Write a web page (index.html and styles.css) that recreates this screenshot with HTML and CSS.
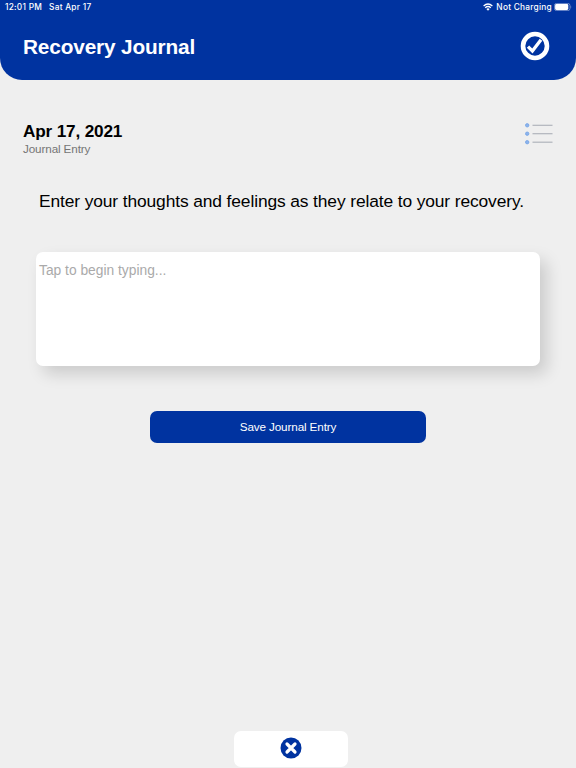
FILE: index.html
```html
<!DOCTYPE html>
<html lang="en">
<head>
  <meta charset="UTF-8">
  <meta name="viewport" content="width=device-width, initial-scale=1.0">
  <title>Recovery Journal</title>
  <link rel="stylesheet" href="styles.css">
</head>
<body>
  <header class="header">
    <div class="status-bar">
      <span class="time">12:01 PM</span>
      <span class="date">Sat Apr 17</span>
      <svg class="wifi" width="10" height="8" viewBox="0 0 10 8" fill="none" stroke="#fff" stroke-width="1.3">
        <path d="M0.6 3 Q5 -1 9.4 3"/>
        <path d="M2.2 4.8 Q5 2.3 7.8 4.8"/>
        <path d="M3.4 5.9 Q5 4.7 6.6 5.9 L5 7.7 Z" fill="#fff" stroke="none"/>
      </svg>
      <span class="charging">Not Charging</span>
      <svg class="battery" width="18" height="8" viewBox="0 0 18 8">
        <rect x="0.4" y="0.4" width="15.6" height="7.2" rx="2.2" fill="none" stroke="#8ba2d4" stroke-width="0.8"/>
        <rect x="1.1" y="1.1" width="13.2" height="5.8" rx="1.3" fill="#fff"/>
        <path d="M16.7 2.7 Q17.9 4 16.7 5.3 Z" fill="#8ba2d4"/>
      </svg>
    </div>
    <div class="title-row">
      <h1>Recovery Journal</h1>
      <svg class="check" width="30" height="30" viewBox="0 0 30 30" fill="none" stroke="#fff">
        <circle cx="15" cy="15" r="12" stroke-width="4.6"/>
        <path d="M8 15.6 L12.4 20 L21 8.8" stroke-width="3.3"/>
      </svg>
    </div>
  </header>

  <main class="content">
    <div class="entry-head">
      <div>
        <h2>Apr 17, 2021</h2>
        <p class="subtitle">Journal Entry</p>
      </div>
      <svg class="list-icon" width="28" height="22" viewBox="0 0 28 22">
        <g stroke="#b0b4bc" stroke-width="1.2">
          <path d="M7.5 2.3 H27.5"/>
          <path d="M7.5 10.7 H27.5"/>
          <path d="M7.5 19.2 H27.5"/>
        </g>
        <g fill="#8db4ec" stroke="#74a3e6" stroke-width="0.8">
          <circle cx="2.2" cy="2.3" r="1.7"/>
          <circle cx="2.2" cy="10.7" r="1.7"/>
          <circle cx="2.2" cy="19.2" r="1.7"/>
        </g>
      </svg>
    </div>

    <p class="prompt">Enter your thoughts and feelings as they relate to your recovery.</p>
    <textarea class="entry" placeholder="Tap to begin typing..."></textarea>
    <button class="save">Save Journal Entry</button>
  </main>

  <button class="close" aria-label="Close">
    <svg width="22" height="22" viewBox="0 0 22 22">
      <circle cx="11" cy="11" r="10.5" fill="#0033a0"/>
      <path d="M7 7 L15 15 M15 7 L7 15" stroke="#fff" stroke-width="3.2" stroke-linecap="round"/>
    </svg>
  </button>
</body>
</html>
```
FILE: styles.css
```css
* {
  margin: 0;
  padding: 0;
  box-sizing: border-box;
}

body {
  display: flex;
  flex-direction: column;
  height: 100vh;
  overflow: hidden;
  background: #efefef;
  color: #000;
  font-family: "Liberation Sans", Arial, sans-serif;
}

.header {
  height: 80px;
  background: #0033a0;
  border-radius: 0 0 22px 22px;
  color: #fff;
}

.status-bar {
  display: flex;
  align-items: center;
  height: 14px;
  padding: 0 4px 0 5px;
  font-family: Inter, sans-serif;
  font-size: 8.3px;
  font-weight: 500;
  letter-spacing: 0.26px;
}

.date {
  margin-left: 7px;
}

.wifi {
  margin-left: auto;
}

.charging {
  margin: 0 2px 0 3px;
}

.title-row {
  display: flex;
  justify-content: space-between;
  align-items: center;
  padding: 17px 26px 0 23px;
}

.title-row h1 {
  font-size: 20.8px;
  letter-spacing: -0.15px;
  line-height: 24px;
  padding-top: 2px;
}

.content {
  display: flex;
  flex-direction: column;
  flex: 1;
}

.entry-head {
  display: flex;
  justify-content: space-between;
  padding: 41px 23px 0;
}

.entry-head h2 {
  font-size: 17.2px;
  letter-spacing: -0.17px;
  line-height: 21px;
}

.subtitle {
  color: #757575;
  font-size: 11.7px;
  letter-spacing: -0.12px;
  line-height: 13px;
}

.list-icon {
  margin-top: 2px;
}

.prompt {
  margin: 36px 0 0 39px;
  font-size: 17.4px;
  letter-spacing: -0.12px;
  line-height: 21px;
  white-space: nowrap;
}

.entry {
  height: 114px;
  margin: 40px 36px 0;
  padding: 11px 3px;
  border: 0;
  border-radius: 7px;
  background: #fff;
  box-shadow: 7px 8px 16px rgba(0, 0, 0, 0.15);
  font-family: inherit;
  font-size: 13.8px;
  line-height: 16px;
  resize: none;
  outline: none;
}

.entry::placeholder {
  color: #aaa;
}

.save {
  width: 276px;
  height: 32px;
  margin: 45px auto 0;
  padding-bottom: 1px;
  border: 0;
  border-radius: 7px;
  background: #0033a0;
  color: #fff;
  font-family: inherit;
  font-size: 11.7px;
  letter-spacing: -0.12px;
}

.close {
  display: flex;
  justify-content: center;
  align-items: center;
  width: 114px;
  height: 36px;
  margin: 0 0 1px 234px;
  padding-bottom: 2px;
  border: 0;
  border-radius: 7px;
  background: #fff;
}
```
